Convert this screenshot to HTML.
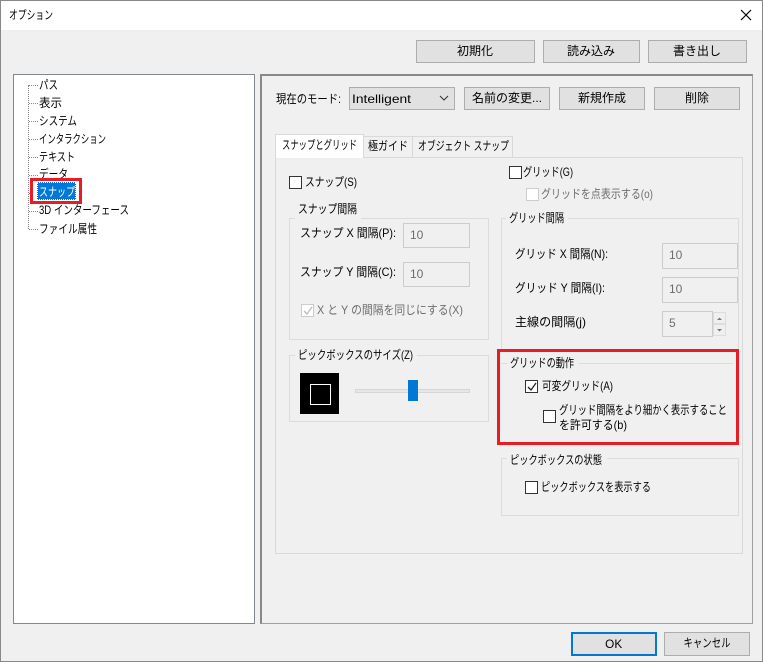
<!DOCTYPE html>
<html><head><meta charset="utf-8"><style>
*{box-sizing:border-box;margin:0;padding:0}
body{width:763px;height:662px;background:#f0f0f0;font-family:"Liberation Sans","Noto Sans CJK JP",sans-serif;font-size:12px;color:#000;position:relative;overflow:hidden}
.a{position:absolute;white-space:nowrap;line-height:16px;transform-origin:0 50%}
.btn{position:absolute;background:#e1e1e1;border:1px solid #adadad;text-align:center;line-height:21px}
.btn span{display:inline-block;white-space:nowrap;transform-origin:50% 50%}
.cb{position:absolute;width:13px;height:13px;border:1px solid #333;background:#fff}
.cbd{border-color:#ccc}
.inp{position:absolute;border:1px solid #ccc;background:#f0f0f0;color:#6d6d6d;padding-left:6px;line-height:22px}
.grp{position:absolute;border:1px solid #dcdcdc}
.gb{position:absolute;background:#f0f0f0}
.dis{color:#6d6d6d}
</style></head><body>
<div style="position:absolute;left:0;top:0;width:763px;height:662px;border:1px solid #888"></div>
<div style="position:absolute;left:1px;top:1px;width:761px;height:29px;background:#fff"></div>
<div class="a" style="left:9px;top:7px;--w:44px">オプション</div>
<svg style="position:absolute;left:740px;top:9px" width="12" height="12"><path d="M1 1L11 11M11 1L1 11" stroke="#000" stroke-width="1.2"/></svg>

<div class="btn" style="left:416px;top:40px;width:119px;height:23px"><span style="--w:36px">初期化</span></div>
<div class="btn" style="left:543px;top:40px;width:97px;height:23px"><span style="--w:48px">読み込み</span></div>
<div class="btn" style="left:648px;top:40px;width:99px;height:23px"><span style="--w:48px">書き出し</span></div>

<!-- tree -->
<div style="position:absolute;left:13px;top:74px;width:242px;height:550px;background:#fff;border:1px solid #828790"></div>
<div style="position:absolute;left:28px;top:85px;width:1px;height:144px;border-left:1px dotted #888"></div>
<svg style="position:absolute;left:28px;top:84px" width="12" height="150"><g stroke="#888" stroke-dasharray="1 1"><path d="M1 1.5H10M1 19.5H10M1 37.5H10M1 55.5H10M1 73.5H10M1 91.5H10M1 109.5H10M1 127.5H10M1 145.5H10"/></g></svg>
<div class="a" style="left:39px;top:77px;--w:19px">パス</div>
<div class="a" style="left:39px;top:95px;--w:23px">表示</div>
<div class="a" style="left:39px;top:113px;--w:38px">システム</div>
<div class="a" style="left:39px;top:131px;--w:67px">インタラクション</div>
<div class="a" style="left:39px;top:149px;--w:36px">テキスト</div>
<div class="a" style="left:39px;top:166px;--w:29px">データ</div>
<div style="position:absolute;left:30px;top:178px;width:52px;height:26px;border:3px solid #e81c24;background:#fff"></div>
<div style="position:absolute;left:37px;top:182px;width:39px;height:18px;background:#0078d7;border:1px dotted #fff"></div>
<div class="a" style="left:39px;top:184px;color:#fff;--w:36px">スナップ</div>
<div class="a" style="left:39px;top:202px;--w:90px">3D インターフェース</div>
<div class="a" style="left:39px;top:221px;--w:58px">ファイル属性</div>

<!-- right panel -->
<div style="position:absolute;left:260px;top:74px;width:493px;height:550px;border:1px solid #a0a0a0;border-top:2px solid #888;border-left:2px solid #888"></div>
<div class="a" style="left:276px;top:91px;--w:65px">現在のモード:</div>
<div style="position:absolute;left:349px;top:87px;width:106px;height:23px;background:#e1e1e1;border:1px solid #adadad"></div>
<div class="a" style="left:352px;top:91px;--w:59px">Intelligent</div>
<svg style="position:absolute;left:439px;top:95px" width="10" height="6"><path d="M1 1L5 5L9 1" stroke="#333" fill="none"/></svg>
<div class="btn" style="left:464px;top:87px;width:86px;height:23px"><span style="--w:70px">名前の変更...</span></div>
<div class="btn" style="left:559px;top:87px;width:86px;height:23px"><span style="--w:48px">新規作成</span></div>
<div class="btn" style="left:654px;top:87px;width:86px;height:23px"><span style="--w:24px">削除</span></div>

<!-- tabs -->
<div style="position:absolute;left:275px;top:157px;width:468px;height:397px;border:1px solid #d9d9d9"></div>
<div style="position:absolute;left:275px;top:134px;width:89px;height:24px;background:#fff;border:1px solid #d9d9d9;border-bottom:none"></div>
<div style="position:absolute;left:363px;top:136px;width:50px;height:21px;border:1px solid #d9d9d9;border-bottom:none"></div>
<div style="position:absolute;left:412px;top:136px;width:101px;height:21px;border:1px solid #d9d9d9;border-bottom:none"></div>
<div class="a" style="left:282px;top:137px;--w:75px">スナップとグリッド</div>
<div class="a" style="left:368px;top:138px;--w:40px">極ガイド</div>
<div class="a" style="left:418px;top:138px;--w:91px">オブジェクト スナップ</div>

<div class="cb" style="left:289px;top:176px"></div>
<div class="a" style="left:305px;top:174px;--w:52px">スナップ(S)</div>

<div class="grp" style="left:289px;top:218px;width:200px;height:122px"></div>
<div class="gb" style="left:295px;top:210px;width:66px;height:14px"></div>
<div class="a" style="left:298px;top:201px;--w:59px">スナップ間隔</div>
<div class="a" style="left:300px;top:225px;--w:96px">スナップ X 間隔(P):</div>
<div class="inp" style="left:403px;top:223px;width:67px;height:25px">10</div>
<div class="a" style="left:300px;top:264px;--w:96px">スナップ Y 間隔(C):</div>
<div class="inp" style="left:403px;top:262px;width:67px;height:25px">10</div>
<div class="cb cbd" style="left:301px;top:304px"></div>
<svg style="position:absolute;left:302px;top:305px" width="12" height="12"><path d="M2 6L5 9L10 2" stroke="#bbb" fill="none" stroke-width="1.3"/></svg>
<div class="a dis" style="left:317px;top:302px;--w:146px">X と Y の間隔を同じにする(X)</div>

<div class="grp" style="left:289px;top:355px;width:200px;height:67px"></div>
<div class="gb" style="left:295px;top:350px;width:122px;height:10px"></div>
<div class="a" style="left:298px;top:347px;--w:115px">ピックボックスのサイズ(Z)</div>
<div style="position:absolute;left:300px;top:373px;width:39px;height:41px;background:#000"></div>
<div style="position:absolute;left:310px;top:384px;width:21px;height:21px;border:1px solid #fff"></div>
<div style="position:absolute;left:355px;top:389px;width:115px;height:4px;background:#e7e7e7;border:1px solid #d6d6d6"></div>
<div style="position:absolute;left:408px;top:380px;width:10px;height:21px;background:#0078d7"></div>

<div class="cb" style="left:509px;top:166px"></div>
<div class="a" style="left:523px;top:164px;--w:50px">グリッド(G)</div>
<div class="cb cbd" style="left:526px;top:188px"></div>
<div class="a dis" style="left:541px;top:186px;--w:112px">グリッドを点表示する(o)</div>

<div class="grp" style="left:501px;top:218px;width:238px;height:140px"></div>
<div class="gb" style="left:506px;top:212px;width:62px;height:12px"></div>
<div class="a" style="left:509px;top:210px;--w:55px">グリッド間隔</div>
<div class="a" style="left:515px;top:246px;--w:93px">グリッド X 間隔(N):</div>
<div class="inp" style="left:662px;top:243px;width:76px;height:26px">10</div>
<div class="a" style="left:515px;top:280px;--w:90px">グリッド Y 間隔(I):</div>
<div class="inp" style="left:662px;top:277px;width:76px;height:26px">10</div>
<div class="a" style="left:515px;top:314px;--w:71px">主線の間隔(j)</div>
<div class="inp" style="left:662px;top:311px;width:51px;height:26px">5</div>
<div style="position:absolute;left:713px;top:312px;width:13px;height:12px;border:1px solid #ddd"></div>
<div style="position:absolute;left:713px;top:324px;width:13px;height:12px;border:1px solid #ddd"></div>
<svg style="position:absolute;left:715px;top:315px" width="9" height="20"><path d="M2 5L4.5 2.5L7 5Z M2 14L4.5 16.5L7 14Z" fill="#777"/></svg>

<div style="position:absolute;left:497px;top:349px;width:242px;height:96px;background:#f0f0f0;border:3px solid #e81c24"></div>
<div style="position:absolute;left:501px;top:363px;width:232px;height:1px;background:#dcdcdc"></div>
<div class="gb" style="left:507px;top:358px;width:72px;height:10px"></div>
<div class="a" style="left:510px;top:355px;--w:64px">グリッドの動作</div>
<div class="cb" style="left:525px;top:380px"></div>
<svg style="position:absolute;left:526px;top:381px" width="12" height="12"><path d="M2 6L5 9L10 2" stroke="#222" fill="none" stroke-width="1.3"/></svg>
<div class="a" style="left:542px;top:378px;--w:71px">可変グリッド(A)</div>
<div class="cb" style="left:543px;top:410px"></div>
<div class="a" style="left:559px;top:402px;--w:168px">グリッド間隔をより細かく表示すること</div>
<div class="a" style="left:559px;top:417px;--w:68px">を許可する(b)</div>

<div class="grp" style="left:501px;top:458px;width:238px;height:58px"></div>
<div class="gb" style="left:507px;top:453px;width:100px;height:10px"></div>
<div class="a" style="left:510px;top:452px;--w:92px">ピックボックスの状態</div>
<div class="cb" style="left:525px;top:481px"></div>
<div class="a" style="left:541px;top:479px;--w:110px">ピックボックスを表示する</div>

<div class="btn" style="left:571px;top:632px;width:86px;height:24px;border:2px solid #0078d7;line-height:20px"><span style="--w:17px">OK</span></div>
<div class="btn" style="left:664px;top:632px;width:86px;height:24px"><span style="--w:47px">キャンセル</span></div>
<script>
document.querySelectorAll('[style*="--w"]').forEach(function(e){
  var w=parseFloat(getComputedStyle(e).getPropertyValue('--w'));
  var r=e.getBoundingClientRect().width;
  if(w&&r){e.style.transform='scaleX('+(w/r)+')';}
});
</script>
</body></html>
